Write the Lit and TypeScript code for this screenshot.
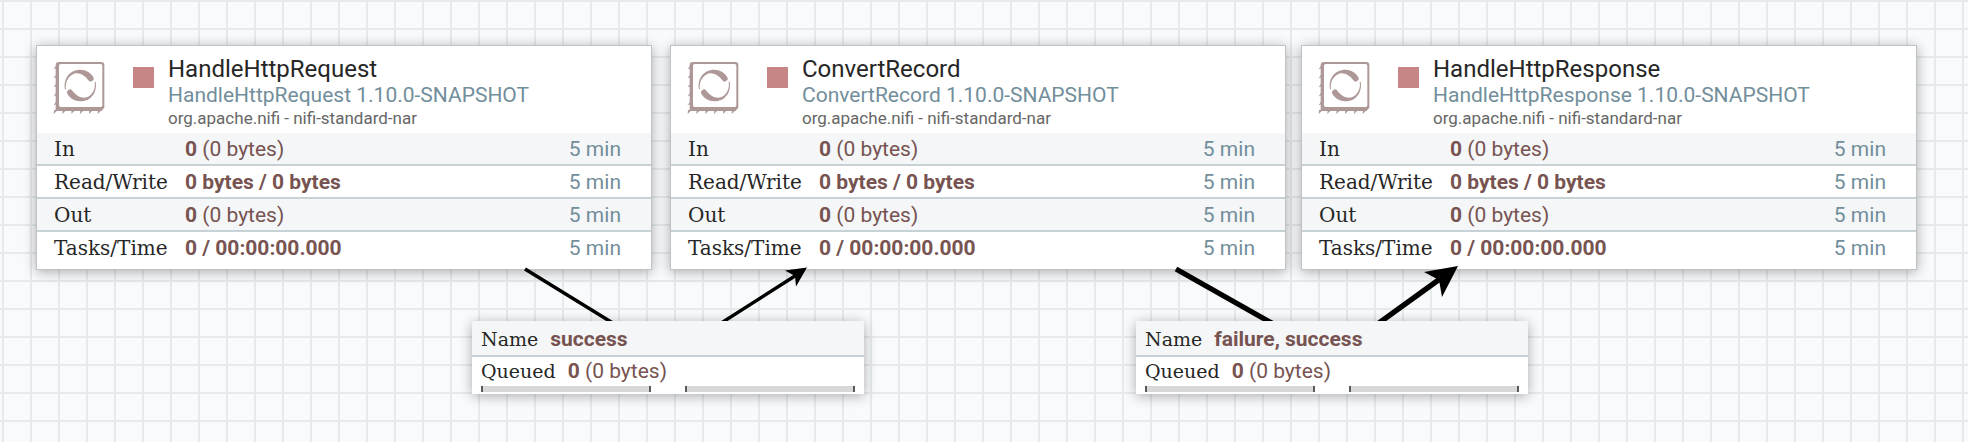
import { LitElement, html, svg, css } from "lit";
import { customElement, property } from "lit/decorators.js";

const processors = [
  { x: 36, type: "HandleHttpRequest" },
  { x: 670, type: "ConvertRecord" },
  { x: 1301, type: "HandleHttpResponse" },
];

const connections = [
  { x: 472, name: "success" },
  { x: 1136, name: "failure, success" },
];

const links = [
  { line: "M525 269L668 357L798 274", head: "M807 267.5L785 270.5L795 276L796 286.5Z", width: 3.5 },
  { line: "M1176 269L1332 357L1444 276", head: "M1458 266L1424 272L1439 280L1442 297Z", width: 5.25 },
];

const leftTeeth = [90, 117, 144, 171, 198];
const bottomTeeth = [83, 109, 136, 162, 189, 215];

@customElement("flow-processor")
class FlowProcessor extends LitElement {
  @property() type = "";

  static styles = css`
    :host { display: block; box-sizing: border-box; background: #fff; border: 1px solid #c0c3c5; box-shadow: 0 2px 12px rgba(0, 0, 0, 0.32); font-family: Roboto, sans-serif; }
    .head { display: flex; height: 87px; }
    .icon { width: 52px; height: 54px; margin: 15px 0 0 16px; flex: none; fill: #ad9897; }
    .state { width: 21px; height: 21px; margin: 21px 14px 0 28px; background: #c78686; flex: none; }
    .name { font-size: 24px; line-height: 28px; margin-top: 9px; color: #262626; }
    .kind { font-size: 21px; line-height: 24px; color: #728e9b; }
    .bundle { font-size: 17px; line-height: 22px; color: #666; }
    .stats { width: 100%; border-spacing: 0; font-size: 21px; line-height: 29px; color: #775351; table-layout: fixed; }
    tr:nth-child(odd) { background: #f4f6f7; }
    th, td { padding: 2px 0 0; vertical-align: baseline; border-bottom: 2px solid #c7d2d7; }
    tr:last-child > * { border-bottom: 0; padding-bottom: 6px; }
    th { width: 131px; padding-left: 17px; text-align: left; font: 20px/29px "Roboto Slab", "DejaVu Serif", serif; color: #262626; white-space: nowrap; }
    .age { width: 60px; padding-right: 30px; text-align: right; color: #728e9b; }
  `;

  private row(label: string, strong: string, rest = "") {
    return html`<tr><th scope="row">${label}</th><td><b>${strong}</b>${rest}</td><td class="age">5 min</td></tr>`;
  }

  render() {
    const crescent = "M117 160C111 126 133 101 163 101C180 101 194 110 201 122A8.5 8.5 0 0 1 187 133C176 118 160 109 144 113C128 119 116 138 120 160Z";
    return html`
      <div class="head">
        <svg class="icon" viewBox="81 75 156 162" aria-hidden="true">
          <path fill-rule="evenodd" d="M99 78H226Q235 78 235 87V215L226 225H89V88Q89 78 99 78ZM104 84Q99 84 99 89V208Q99 213 104 213H224Q229 213 229 208V89Q229 84 224 84Z"/>
          ${leftTeeth.map((y) => svg`<path d=${`M91 ${y - 2}L83 ${y + 10}L91 ${y + 7}Z`}/>`)}
          ${bottomTeeth.map((x) => svg`<path d=${`M${x + 1} 222H${x + 12}L${x} 234Z`}/>`)}
          <path d=${crescent}/>
          <path d=${crescent} transform="rotate(180 163 148.5)"/>
        </svg>
        <div class="state"></div>
        <div>
          <div class="name">${this.type}</div>
          <div class="kind">${this.type} 1.10.0-SNAPSHOT</div>
          <div class="bundle">org.apache.nifi - nifi-standard-nar</div>
        </div>
      </div>
      <table class="stats"><tbody>
        ${this.row("In", "0", " (0 bytes)")}
        ${this.row("Read/Write", "0 bytes / 0 bytes")}
        ${this.row("Out", "0", " (0 bytes)")}
        ${this.row("Tasks/Time", "0 / 00:00:00.000")}
      </tbody></table>`;
  }
}

@customElement("flow-connection")
class FlowConnection extends LitElement {
  @property() name = "";

  static styles = css`
    :host { display: block; background: #fff; box-shadow: 0 2px 12px rgba(0, 0, 0, 0.32); font: 21px/29px Roboto, sans-serif; color: #775351; }
    .row { display: flex; gap: 12px; height: 29px; padding: 0 9px; }
    .top { height: 34px; line-height: 36px; background: #f4f6f7; border-bottom: 2px solid #c7d2d7; }
    .label { font-family: "Roboto Slab", "DejaVu Serif", serif; font-size: 19px; color: #262626; }
    .bars { display: flex; justify-content: space-between; padding: 0 9px 2px; }
    .bar { box-sizing: border-box; width: 170px; height: 6px; background: #d8d8d8; border: solid #5a5a5a; border-width: 0 2px; }
  `;

  render() {
    return html`
      <div class="row top"><span class="label">Name</span><b>${this.name}</b></div>
      <div class="row"><span class="label">Queued</span><span><b>0</b> (0 bytes)</span></div>
      <div class="bars"><div class="bar"></div><div class="bar"></div></div>`;
  }
}

@customElement("app-root")
class AppRoot extends LitElement {
  static styles = css`
    :host { display: block; }
    .canvas {
      position: relative; min-height: 100vh; overflow: hidden; background-color: #f9fafc;
      background-image: linear-gradient(#e5ebeb 2px, transparent 2px), linear-gradient(90deg, #e5ebeb 2px, transparent 2px);
      background-size: 28px 28px; background-position: 0 0, 2px 0;
    }
    flow-processor { position: absolute; top: 45px; width: 616px; }
    flow-connection { position: absolute; top: 321px; width: 392px; }
    .links { position: absolute; inset: 0; width: 100%; height: 100%; }
  `;

  render() {
    return html`
      <main class="canvas">
        ${processors.map((p) => html`<flow-processor style="left:${p.x}px" .type=${p.type}></flow-processor>`)}
        <svg class="links" aria-hidden="true">
          ${links.map((l) => svg`
            <path d=${l.line} fill="none" stroke="#000" stroke-width=${l.width}/>
            <path d=${l.head}/>`)}
        </svg>
        ${connections.map((c) => html`<flow-connection style="left:${c.x}px" .name=${c.name}></flow-connection>`)}
      </main>`;
  }
}
